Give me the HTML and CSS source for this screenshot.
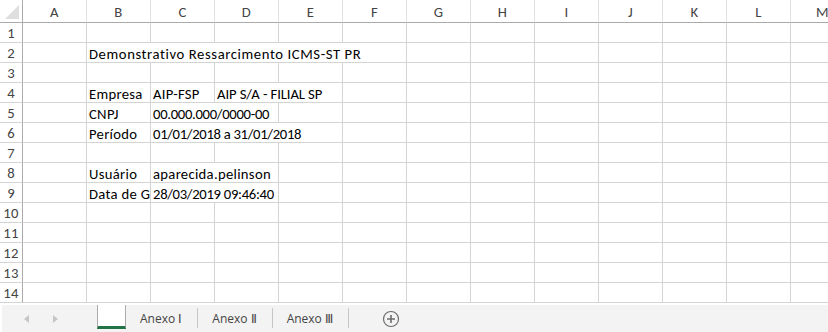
FILE: index.html
```html
<!DOCTYPE html>
<html lang="pt-BR">
<head>
  <meta charset="UTF-8" />
  <title>Demonstrativo Ressarcimento ICMS-ST PR</title>
  <link rel="stylesheet" href="styles.css">
</head>
<body>
  <div class="sheet">
    <div class="grid" id="grid">
      <div class="corner"><span class="corner-tri"></span></div>
    </div>

    <div class="tabbar">
      <div class="nav">
        <span class="arrow left"></span>
        <span class="arrow right"></span>
      </div>
      <div class="tab active"></div>
      <div class="tab">Anexo Ⅰ</div>
      <div class="tab">Anexo Ⅱ</div>
      <div class="tab">Anexo Ⅲ</div>
      <div class="add-sheet">
        <svg width="18" height="18" viewBox="0 0 18 18">
          <circle cx="9" cy="9" r="7.5" fill="none" stroke="#6d6d6d" stroke-width="1.2"/>
          <path d="M9 5v8M5 9h8" stroke="#6d6d6d" stroke-width="1.6"/>
        </svg>
      </div>
    </div>
  </div>

  <script>
    const grid = document.getElementById("grid");
    const cols = "ABCDEFGHIJKLM".split("");
    const rows = 14;

    // cell contents, span = how many columns the text runs across
    const cells = {
      "B2": { text: "Demonstrativo Ressarcimento ICMS-ST PR", span: 5, cls: "title" },
      "B4": { text: "Empresa" },
      "C4": { text: "AIP-FSP" },
      "D4": { text: "AIP S/A - FILIAL SP", span: 2, cls: "caps" },
      "B5": { text: "CNPJ" },
      "C5": { text: "00.000.000/0000-00", span: 2, cls: "num" },
      "B6": { text: "Período" },
      "C6": { text: "01/01/2018 a 31/01/2018", span: 3, cls: "num" },
      "B8": { text: "Usuário" },
      "C8": { text: "aparecida.pelinson", span: 2 },
      "B9": { text: "Data de Geração" },
      "C9": { text: "28/03/2019 09:46:40", span: 2, cls: "num" }
    };

    cols.forEach(c => {
      const h = document.createElement("div");
      h.className = "col-head";
      h.textContent = c;
      grid.appendChild(h);
    });

    for (let r = 1; r <= rows; r++) {
      const rh = document.createElement("div");
      rh.className = "row-head";
      rh.textContent = r;
      grid.appendChild(rh);

      for (let i = 0; i < cols.length; i++) {
        const cell = document.createElement("div");
        cell.className = "cell";
        const data = cells[cols[i] + r];
        if (data) {
          cell.textContent = data.text;
          if (data.cls) cell.classList.add(data.cls);
          if (data.span) {
            cell.style.gridColumn = "span " + data.span;
            i += data.span - 1;
          }
        }
        grid.appendChild(cell);
      }
    }
  </script>
</body>
</html>
```

FILE: styles.css
```css
body {
  margin: 0;
  background: white;
  font-family: Carlito, Lato, "Liberation Sans", sans-serif;
  color: #000;
  overflow: hidden;
}
.sheet {
  width: 828px;
  height: 332px;
  overflow: hidden;
}
.grid {
  display: grid;
  grid-template-columns: 23px repeat(13, 64px);
  grid-template-rows: 23px;
  grid-auto-rows: 20px;
  width: 855px;
}
.corner,
.col-head,
.row-head,
.cell {
  box-sizing: border-box;
  border-right: 1px solid #d4d4d4;
  border-bottom: 1px solid #d4d4d4;
}
.corner {
  position: relative;
  border-right-color: #ababab;
  border-bottom-color: #ababab;
}
.corner-tri {
  position: absolute;
  right: 3px;
  bottom: 3px;
  width: 0;
  height: 0;
  border-left: 14px solid transparent;
  border-bottom: 14px solid #dfdfdf;
}
.col-head {
  border-bottom-color: #ababab;
  border-right-color: #e1e1e1;
  color: #444;
  font-size: 14.67px;
  letter-spacing: 0.3px;
  text-align: center;
  line-height: 24px;
}
.row-head {
  border-right-color: #ababab;
  color: #444;
  font-size: 14.67px;
  letter-spacing: 0.2px;
  text-align: center;
  line-height: 21px;
}
.cell {
  font-size: 14.67px;
  letter-spacing: 0.3px;
  line-height: 22px;
  padding-left: 2px;
  white-space: nowrap;
  overflow: hidden;
}
.cell.title {
  letter-spacing: 0.6px;
}
.cell.num {
  letter-spacing: -0.3px;
}
.cell.caps {
  letter-spacing: -0.1px;
}
.tabbar {
  display: flex;
  align-items: stretch;
  height: 27px;
  margin: 2px 0 0 2px;
  background: #f3f3f3;
  font-family: "Open Sans", "Noto Sans", sans-serif;
  font-size: 12px;
  color: #444;
}
.nav {
  display: flex;
  align-items: center;
  gap: 24px;
  width: 95px;
  padding-left: 22px;
  box-sizing: border-box;
}
.arrow {
  width: 0;
  height: 0;
  border-top: 4px solid transparent;
  border-bottom: 4px solid transparent;
}
.arrow.left {
  border-right: 5px solid #c6c6c6;
}
.arrow.right {
  border-left: 5px solid #c6c6c6;
}
.tab {
  display: flex;
  align-items: center;
  padding: 0 15px 0 14px;
  margin: 3px 0 4px;
  border-right: 1px solid #c6c6c6;
}
.tab.active {
  width: 29px;
  box-sizing: border-box;
  margin: 0;
  padding: 0;
  background: white;
  border-left: 1px solid #ababab;
  border-right: 1px solid #ababab;
  border-bottom: 3px solid #217346;
  height: 24px;
}
.add-sheet {
  display: flex;
  align-items: center;
  margin-left: 33px;
}
```
